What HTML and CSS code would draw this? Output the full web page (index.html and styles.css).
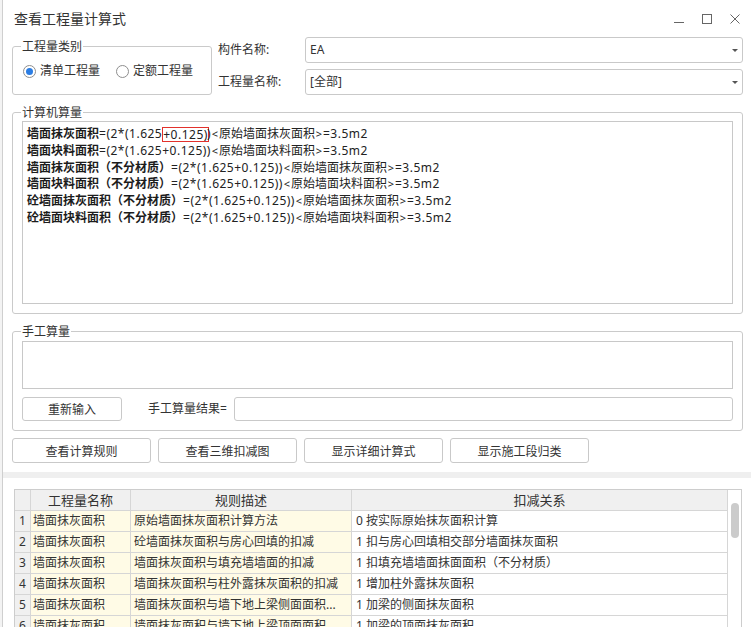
FILE: index.html
```html
<!DOCTYPE html>
<html lang="zh-CN">
<head>
<meta charset="utf-8">
<title>查看工程量计算式</title>
<link rel="stylesheet" href="styles.css">
</head>
<body>
<div class="backdrop"></div>
<div class="dialog">
  <div class="titlebar">
    <div class="title">查看工程量计算式</div>
    <div class="winctl">
      <svg width="10" height="10" viewBox="0 0 10 10"><line x1="0" y1="8.5" x2="10" y2="8.5" stroke="#666" stroke-width="1"/></svg>
      <svg width="10" height="10" viewBox="0 0 10 10"><rect x="0.5" y="0.5" width="9" height="9" fill="none" stroke="#666" stroke-width="1"/></svg>
      <svg width="10" height="10" viewBox="0 0 10 10"><path d="M0.5 0.5 L9.5 9.5 M9.5 0.5 L0.5 9.5" stroke="#666" stroke-width="1" fill="none"/></svg>
    </div>
  </div>

  <div class="top-pane">
    <div class="top-row">
      <fieldset class="group kind">
        <legend>工程量类别</legend>
        <div class="radios">
          <span class="radio on"></span><span class="radio-label">清单工程量</span>
          <span class="radio second"></span><span class="radio-label">定额工程量</span>
        </div>
      </fieldset>
      <div class="props">
        <div class="prop-label">构件名称:</div>
        <div class="combo"><span class="combo-text">EA</span><span class="arrow"></span></div>
        <div class="prop-label">工程量名称:</div>
        <div class="combo"><span class="combo-text">[全部]</span><span class="arrow"></span></div>
      </div>
    </div>

    <fieldset class="group computer">
      <legend>计算机算量</legend>
      <div class="formula">
        <div class="line"><b>墙面抹灰面积</b>=(2*(1.625<span class="hl">+0.125)</span>)<span class="ab lt">&lt;</span><span class="cn">原始墙面抹灰面积</span><span class="ab gt">&gt;</span>=3.5m2</div>
        <div class="line"><b>墙面块料面积</b>=(2*(1.625+0.125))<span class="ab lt">&lt;</span><span class="cn">原始墙面块料面积</span><span class="ab gt">&gt;</span>=3.5m2</div>
        <div class="line"><b>墙面抹灰面积（不分材质）</b>=(2*(1.625+0.125))<span class="ab lt">&lt;</span><span class="cn">原始墙面抹灰面积</span><span class="ab gt">&gt;</span>=3.5m2</div>
        <div class="line"><b>墙面块料面积（不分材质）</b>=(2*(1.625+0.125))<span class="ab lt">&lt;</span><span class="cn">原始墙面块料面积</span><span class="ab gt">&gt;</span>=3.5m2</div>
        <div class="line"><b>砼墙面抹灰面积（不分材质）</b>=(2*(1.625+0.125))<span class="ab lt">&lt;</span><span class="cn">原始墙面抹灰面积</span><span class="ab gt">&gt;</span>=3.5m2</div>
        <div class="line"><b>砼墙面块料面积（不分材质）</b>=(2*(1.625+0.125))<span class="ab lt">&lt;</span><span class="cn">原始墙面块料面积</span><span class="ab gt">&gt;</span>=3.5m2</div>
      </div>
    </fieldset>

    <fieldset class="group manual">
      <legend>手工算量</legend>
      <div class="manual-box"></div>
      <div class="manual-row">
        <div class="btn reset">重新输入</div>
        <div class="result-label">手工算量结果=</div>
        <div class="result-input"></div>
      </div>
    </fieldset>

    <div class="actions">
      <div class="btn action">查看计算规则</div>
      <div class="btn action">查看三维扣减图</div>
      <div class="btn action">显示详细计算式</div>
      <div class="btn action">显示施工段归类</div>
    </div>
  </div>

  <div class="splitter"></div>

  <div class="bottom-pane">
    <div class="grid-wrap">
      <div class="grid">
        <div class="row head">
          <div class="cell num"></div>
          <div class="cell hc">工程量名称</div>
          <div class="cell hc">规则描述</div>
          <div class="cell hc">扣减关系</div>
        </div>
        <div class="row">
          <div class="cell num">1</div>
          <div class="cell name">墙面抹灰面积</div>
          <div class="cell desc">原始墙面抹灰面积计算方法</div>
          <div class="cell rel">0 按实际原始抹灰面积计算</div>
        </div>
        <div class="row">
          <div class="cell num">2</div>
          <div class="cell name">墙面抹灰面积</div>
          <div class="cell desc">砼墙面抹灰面积与房心回填的扣减</div>
          <div class="cell rel">1 扣与房心回填相交部分墙面抹灰面积</div>
        </div>
        <div class="row">
          <div class="cell num">3</div>
          <div class="cell name">墙面抹灰面积</div>
          <div class="cell desc">墙面抹灰面积与填充墙墙面的扣减</div>
          <div class="cell rel">1 扣填充墙墙面抹面面积（不分材质）</div>
        </div>
        <div class="row">
          <div class="cell num">4</div>
          <div class="cell name">墙面抹灰面积</div>
          <div class="cell desc">墙面抹灰面积与柱外露抹灰面积的扣减</div>
          <div class="cell rel">1 增加柱外露抹灰面积</div>
        </div>
        <div class="row">
          <div class="cell num">5</div>
          <div class="cell name">墙面抹灰面积</div>
          <div class="cell desc">墙面抹灰面积与墙下地上梁侧面面积...</div>
          <div class="cell rel">1 加梁的侧面抹灰面积</div>
        </div>
        <div class="row">
          <div class="cell num">6</div>
          <div class="cell name">墙面抹灰面积</div>
          <div class="cell desc">墙面抹灰面积与墙下地上梁顶面面积...</div>
          <div class="cell rel">1 加梁的顶面抹灰面积</div>
        </div>
      </div>
      <div class="vscroll"><div class="thumb"></div></div>
    </div>
  </div>
</div>
</body>
</html>
```

FILE: styles.css
```css
* { box-sizing: border-box; }
html, body { margin: 0; padding: 0; }
body {
  width: 751px;
  height: 627px;
  overflow: hidden;
  display: flex;
  background: #fff;
  color: #333;
  font-family: "Noto Sans", "Noto Sans CJK SC", "Microsoft YaHei", sans-serif;
  font-size: 12px;
}
.backdrop { width: 2px; background: #f3f3f3; flex: none; }
.dialog {
  flex: 1;
  border-left: 1px solid #cfcfcf;
  display: flex;
  flex-direction: column;
  min-width: 0;
}

/* title bar */
.titlebar {
  height: 37px;
  flex: none;
  display: flex;
  align-items: center;
  padding: 0 11px;
}
.title { flex: 1; font-size: 14px; line-height: 20px; color: #333; }
.winctl { display: flex; gap: 18px; align-items: center; }
.winctl svg { display: block; }

/* top pane */
.top-pane { padding: 0 8px 0 9px; flex: none; }
.top-row { display: flex; height: 58px; }

.group {
  margin: 0;
  padding: 0;
  border: 1px solid #cacaca;
  border-radius: 3px;
  min-inline-size: 0;
}
.group legend {
  margin-left: 8px;
  padding: 0 1px;
  font-size: 12px;
  line-height: 15px;
  color: #333;
}

.kind { width: 200px; margin-top: 2px; flex: none; }
.radios {
  display: flex;
  align-items: center;
  height: 16px;
  box-sizing: content-box;
  padding: 9px 0 14px 10px;
}
.radio {
  width: 13px;
  height: 13px;
  border: 1px solid #8e8e8e;
  border-radius: 50%;
  display: flex;
  align-items: center;
  justify-content: center;
  flex: none;
  background: #fff;
}
.radio.on::after {
  content: "";
  width: 7px;
  height: 7px;
  border-radius: 50%;
  background: #2b7de3;
}
.radio.second { margin-left: 16px; }
.radio-label { margin-left: 4px; font-size: 12px; line-height: 16px; }

.props {
  flex: 1;
  margin-left: 6px;
  display: grid;
  grid-template-columns: 87px 1fr;
  grid-template-rows: 26px 26px;
  row-gap: 6px;
  align-items: center;
}
.prop-label { font-size: 12px; line-height: 16px; }
.combo {
  height: 26px;
  border: 1px solid #c9c9c9;
  border-radius: 3px;
  display: flex;
  align-items: center;
  padding: 0 4px 0 4px;
  background: #fff;
}
.combo-text { flex: 1; line-height: 16px; }
.arrow {
  width: 0;
  height: 0;
  border-left: 3px solid transparent;
  border-right: 3px solid transparent;
  border-top: 3px solid #555;
}

/* computer quantities */
.computer { margin-top: 10px; }
.formula {
  margin: 1px 9px 9px 9px;
  height: 183px;
  border: 1px solid #c8c8c8;
  padding: 3px 4px 0 4px;
  color: #222;
  font-size: 12px;
  line-height: 16.8px;
  letter-spacing: 0.5px;
}
.formula .line { white-space: nowrap; height: 16.8px; }
.formula b {
  font-weight: 700;
  color: #1c1c1c;
  font-family: "Noto Sans CJK SC", sans-serif;
  letter-spacing: 0;
}
.formula .cn { letter-spacing: 0; }
.ab {
  display: inline-block;
  text-align: center;
  font-size: 11px;
  letter-spacing: 0;
}
.ab.lt { width: 8px; }
.ab.gt { width: 8px; }
.hl {
  display: inline-block;
  vertical-align: top;
  margin-top: 1.5px;
  margin-right: -2px;
  line-height: 13px;
  border: 1px solid #e2312c;
  padding: 0;
}

/* manual */
.manual { margin-top: 10px; }
.manual-box {
  margin: 2px 9px 0 9px;
  height: 48px;
  border: 1px solid #c8c8c8;
}
.manual-row {
  display: flex;
  align-items: center;
  height: 24px;
  margin: 8px 9px 9px 9px;
}
.btn {
  border: 1px solid #c9c9c9;
  border-radius: 3px;
  background: #fff;
  display: flex;
  align-items: center;
  justify-content: center;
  font-size: 12px;
  color: #333;
}
.reset { width: 100px; height: 24px; }
.result-label { margin-left: 26px; width: 80px; white-space: nowrap; line-height: 16px; }
.result-input {
  flex: 1;
  margin-left: 6px;
  height: 24px;
  border: 1px solid #c9c9c9;
  border-radius: 3px;
}

.actions { display: flex; gap: 7px; margin-top: 7px; }
.action { width: 139px; height: 25px; }

.splitter { height: 6px; margin-top: 9px; background: #efefef; flex: none; }

/* grid */
.bottom-pane { padding: 11px 9px 0 11px; flex: 1; min-height: 0; }
.grid-wrap {
  display: flex;
  border: 1px solid #cdcdcd;
  border-bottom: none;
  height: 200px;
}
.grid { width: 713px; flex: none; }
.row {
  display: grid;
  grid-template-columns: 16px 100px 221px 376px;
  height: 21px;
}
.cell {
  border-right: 1px solid #d6d6d6;
  border-bottom: 1px solid #d6d6d6;
  height: 21px;
  line-height: 20px;
  font-size: 12px;
  white-space: nowrap;
  overflow: hidden;
  padding: 0 0 0 3px;
  color: #333;
}
.head .cell { background: #f0f0f0; text-align: center; padding: 0; font-size: 13px; }
.cell.num { background: #f0f0f0; text-align: center; padding: 0; }
.cell.name, .cell.desc { background: #fffbe6; }
.cell.name { padding-left: 2px; }
.cell.rel { padding-left: 4px; }
.vscroll { width: 14px; flex: none; padding: 13px 0 0 3px; }
.thumb { width: 8px; height: 35px; border-radius: 4px; background: #cbcbcb; }
```
